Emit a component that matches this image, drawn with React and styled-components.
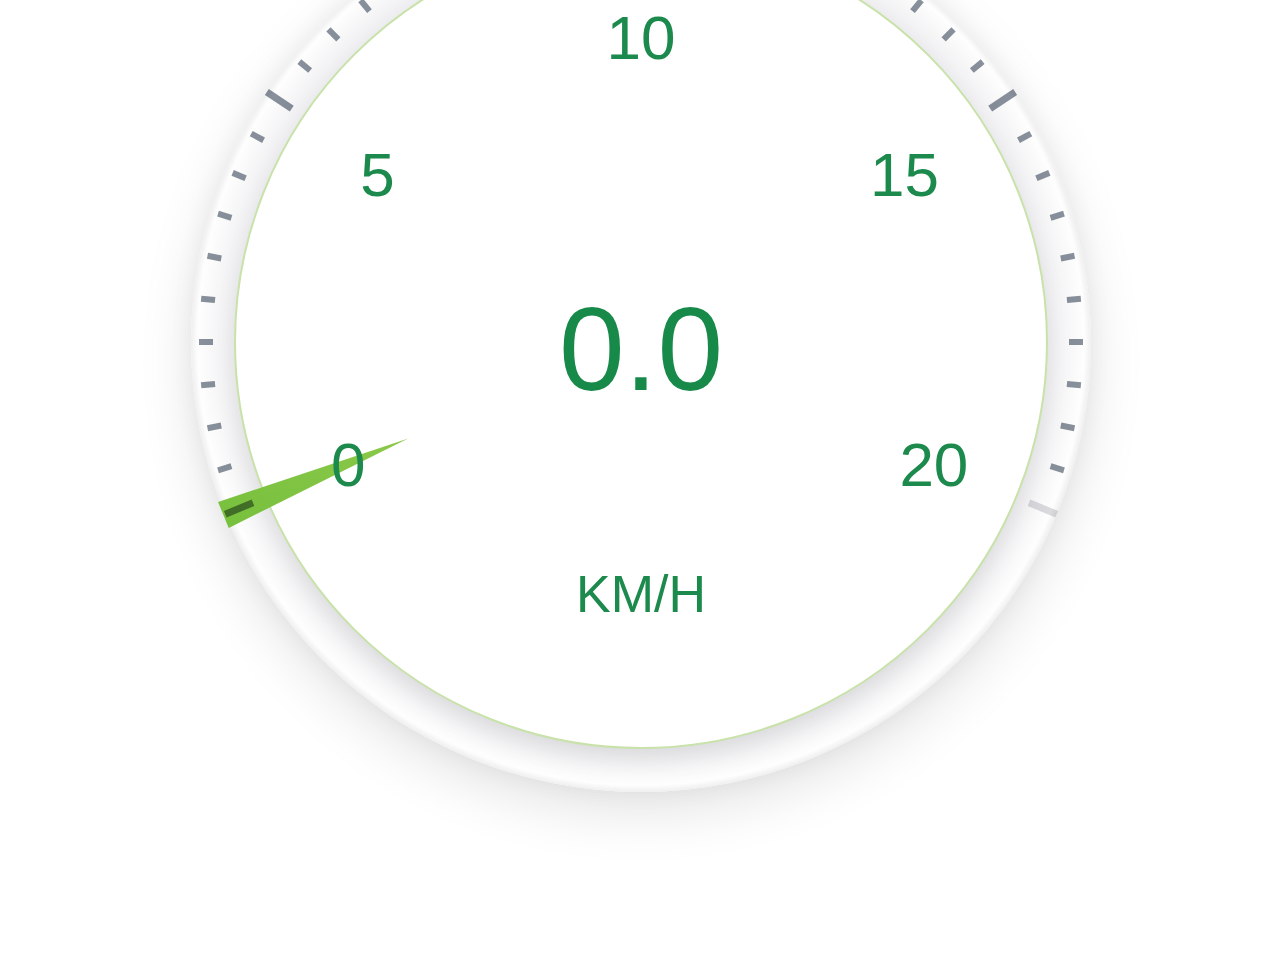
import React from 'react';
import styled, { createGlobalStyle } from 'styled-components';

// dial geometry, in the svg's own 900x900 box
const SIZE = 900;
const C = SIZE / 2;
const FACE_R = 406;
const START = -112.5;
const SWEEP = 225;
const MAX = 20;
const speed = 0;

const GlobalStyle = createGlobalStyle`
  html, body {
    margin: 0;
    padding: 0;
    background: #ffffff;
  }

  body {
    font-family: "Liberation Sans", Arial, sans-serif;
    overflow: hidden;
  }
`;

const Page = styled.div`
  width: 1280px;
  height: 960px;
  box-sizing: border-box;
  padding-left: 2px;
  overflow: hidden;
  display: flex;
  justify-content: center;
`;

const Dial = styled.div`
  position: relative;
  flex: none;
  width: ${SIZE}px;
  height: ${SIZE}px;
  margin-top: -108px;
  border-radius: 50%;
  box-shadow: 0 20px 56px rgba(0, 0, 0, 0.11), 0 0 24px rgba(0, 0, 0, 0.05);
`;

const DialArt = styled.svg`
  display: block;
  width: 100%;
  height: 100%;
`;

const ScaleLabel = styled.span`
  position: absolute;
  transform: translate(-50%, -50%);
  font-size: 62px;
  line-height: 1;
  color: #1c8a4c;
  white-space: nowrap;
`;

const Readout = styled.div`
  position: absolute;
  inset: 0;
  display: flex;
  flex-direction: column;
  align-items: center;
  padding-top: 398px;
  gap: 160px;
  pointer-events: none;
`;

const Value = styled.div`
  font-size: 118px;
  line-height: 1;
  color: #178a4a;
`;

const Unit = styled.div`
  font-size: 52px;
  line-height: 1;
  color: #1c8a4c;
`;

const angleFor = (v) => START + (v / MAX) * SWEEP;

const polar = (r, deg) => {
  const a = (deg * Math.PI) / 180;
  return [C + r * Math.sin(a), C - r * Math.cos(a)];
};

const ticks = Array.from({ length: 41 }, (_, i) => {
  const major = i % 10 === 0;
  const deg = START + i * (SWEEP / 40);
  const [x1, y1] = polar(major ? 420 : 428, deg);
  const [x2, y2] = polar(major ? 450 : 442, deg);
  return { i, major, x1, y1, x2, y2, last: i === 40 };
});

// the numerals sit on a slightly flattened ring, a little below the hub
const labels = [0, 5, 10, 15, 20].map((v) => {
  const a = (angleFor(v) * Math.PI) / 180;
  return { v, x: C + 317 * Math.sin(a), y: C + 5 - 309 * Math.cos(a) };
});

const Needle = ({ value }) => {
  const deg = angleFor(value);
  const a = (deg * Math.PI) / 180;
  const tx = Math.cos(a);
  const ty = Math.sin(a);
  const [px, py] = polar(252, deg);
  const [bx, by] = polar(452, deg);
  const pts = `${px},${py} ${bx + tx * 14},${by + ty * 14} ${bx - tx * 14},${by - ty * 14}`;
  return <polygon points={pts} fill="url(#needle)" />;
};

const App = () => (
  <>
    <GlobalStyle />
    <Page>
      <Dial>
        <DialArt viewBox={`0 0 ${SIZE} ${SIZE}`}>
          <defs>
            <radialGradient id="bezel" cx={C} cy={C} r={C} gradientUnits="userSpaceOnUse">
              <stop offset="0.88" stopColor="#ebebed" />
              <stop offset="0.92" stopColor="#f1f1f3" />
              <stop offset="0.955" stopColor="#f8f8f9" />
              <stop offset="0.985" stopColor="#fefefe" />
              <stop offset="1" stopColor="#efeff0" />
            </radialGradient>
            <linearGradient id="needle" x1="0" y1="1" x2="1" y2="0">
              <stop offset="0" stopColor="#76c03c" />
              <stop offset="1" stopColor="#8cc84b" />
            </linearGradient>
            <filter id="lift" x="-10%" y="-10%" width="120%" height="125%">
              <feDropShadow dx="0" dy="12" stdDeviation="10" floodColor="#000000" floodOpacity="0.08" />
            </filter>
          </defs>

          <circle cx={C} cy={C} r={C} fill="url(#bezel)" />
          <circle cx={C} cy={C} r={FACE_R} fill="#ffffff" filter="url(#lift)" />
          <circle cx={C} cy={C} r={FACE_R} fill="none" stroke="#c8e2aa" strokeWidth="2" />

          <Needle value={speed} />

          {ticks.map((t) => (
            <line
              key={t.i}
              x1={t.x1}
              y1={t.y1}
              x2={t.x2}
              y2={t.y2}
              stroke={t.last ? '#d8d9dc' : '#7b8591'}
              strokeWidth={t.major ? 7 : 6}
              style={{ mixBlendMode: 'multiply', opacity: 0.9 }}
            />
          ))}
        </DialArt>

        {labels.map((l) => (
          <ScaleLabel key={l.v} style={{ left: l.x, top: l.y }}>
            {l.v}
          </ScaleLabel>
        ))}

        <Readout>
          <Value>{speed.toFixed(1)}</Value>
          <Unit>KM/H</Unit>
        </Readout>
      </Dial>
    </Page>
  </>
);

export default App;
